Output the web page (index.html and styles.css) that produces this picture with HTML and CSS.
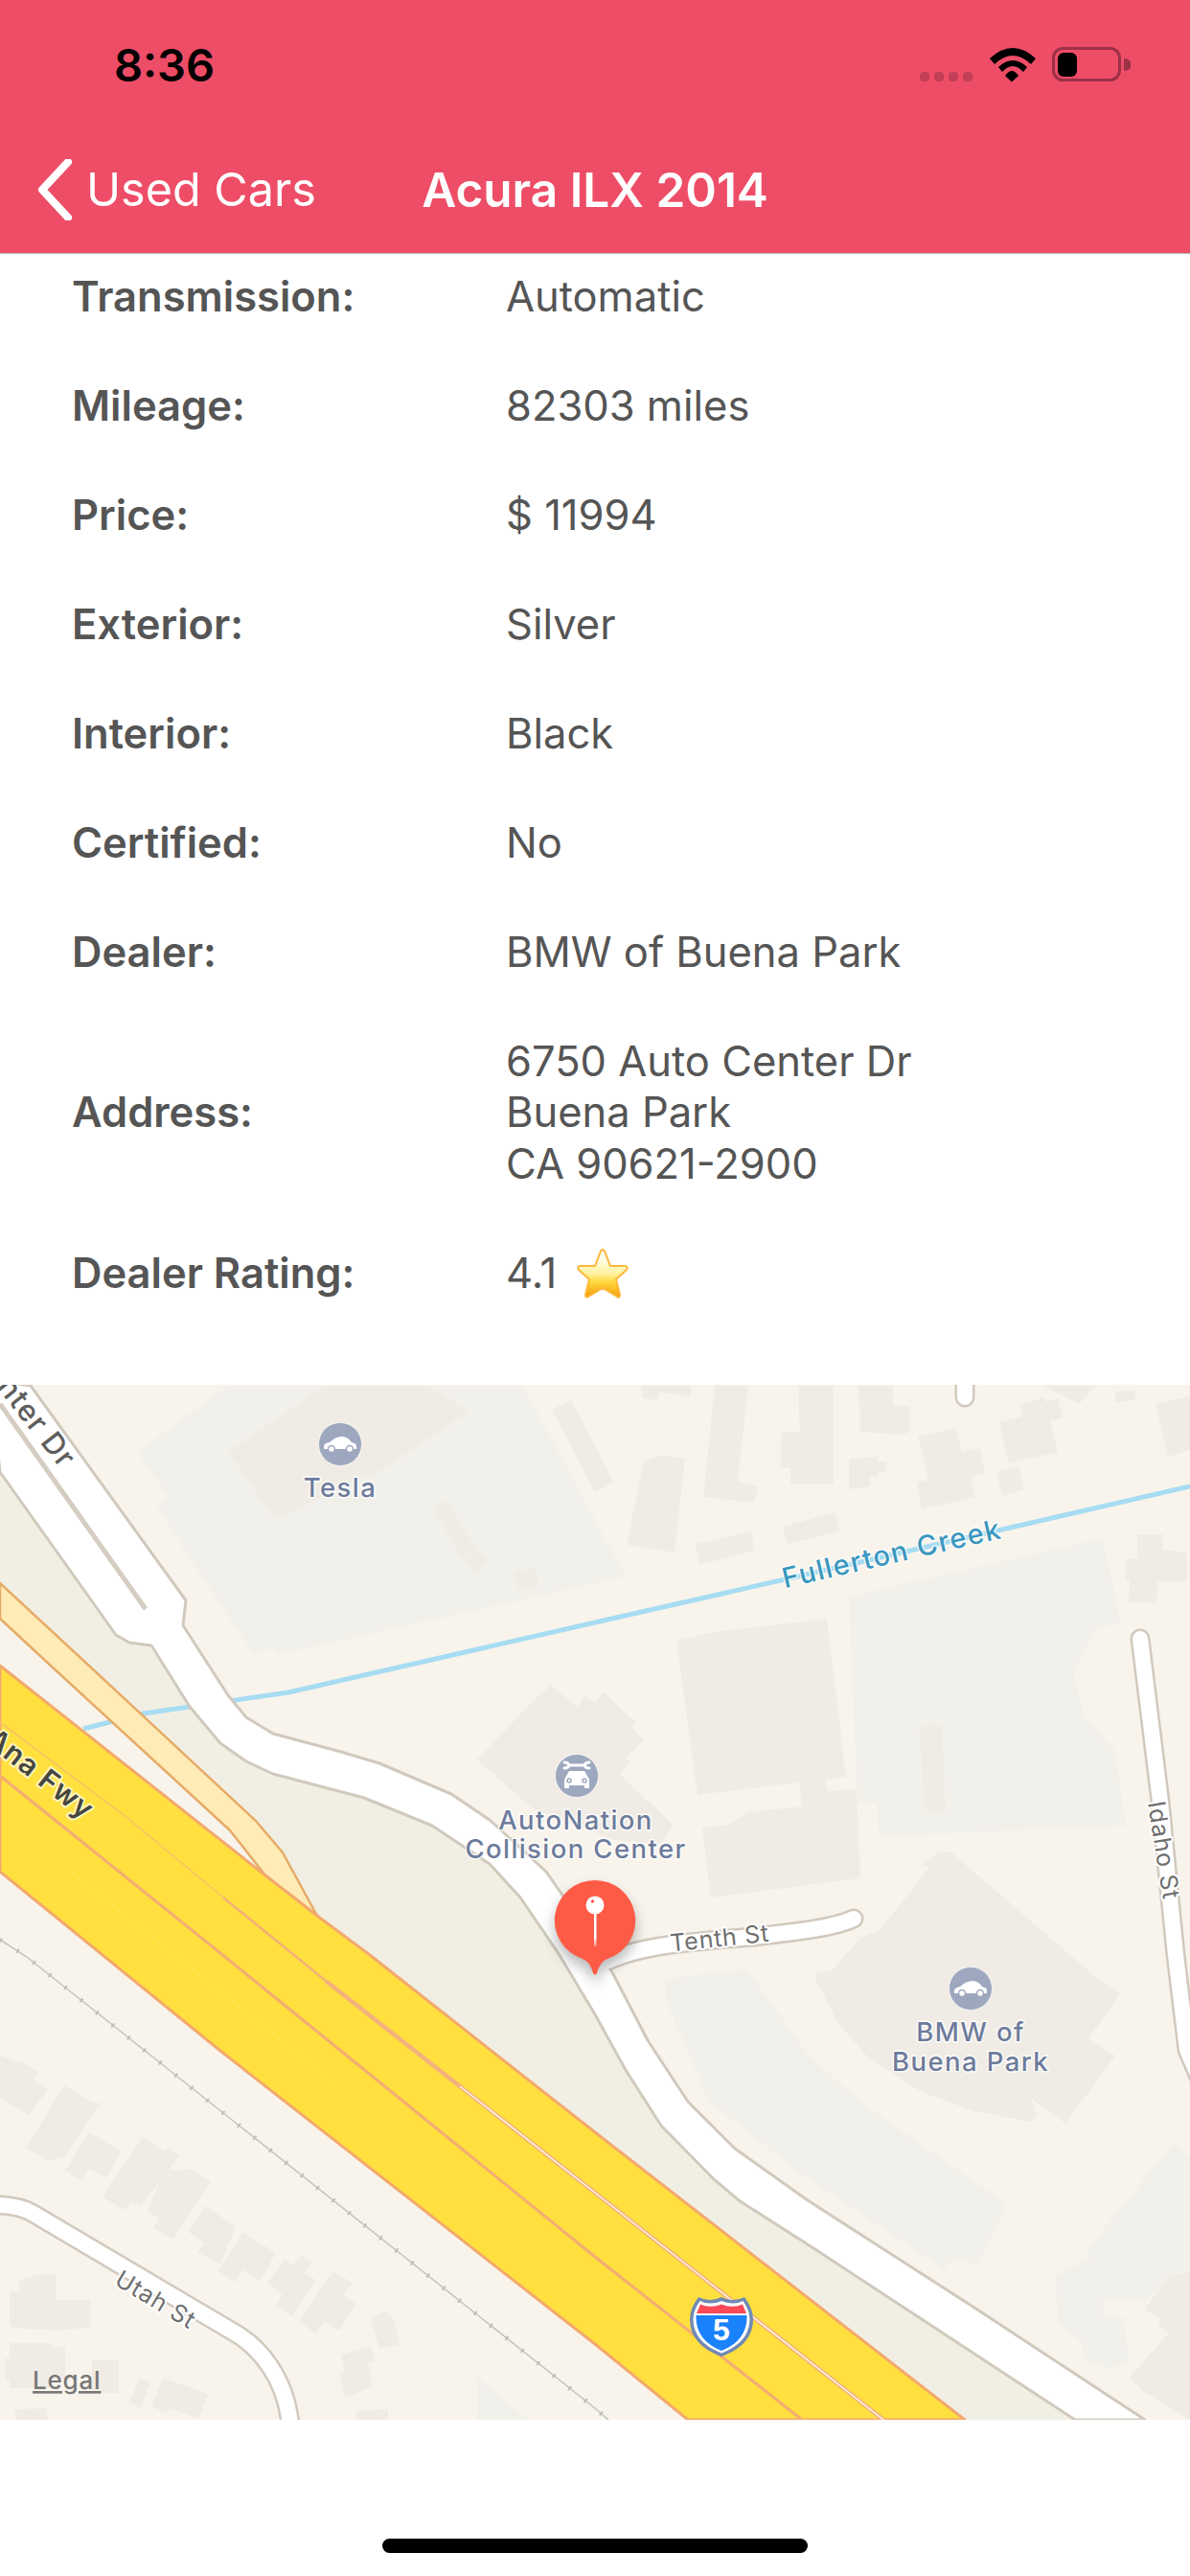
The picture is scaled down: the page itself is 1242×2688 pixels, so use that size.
FILE: index.html
```html
<!DOCTYPE html>
<html lang="en">
<head>
<meta charset="utf-8">
<title>Acura ILX 2014</title>
<link rel="stylesheet" href="styles.css">
</head>
<body>
<div class="page">
  <header class="header">
    <div class="status">
      <span class="time">8:36</span>
      <svg class="status-icons" viewBox="955 46 225 44" aria-hidden="true">
        <g class="sig"><rect x="960" y="75" width="10" height="10" rx="4"/><rect x="975" y="75" width="10" height="10" rx="4"/><rect x="990" y="75" width="10" height="10" rx="4"/><rect x="1005" y="75" width="10" height="10" rx="4"/></g>
        <path class="wifi" d="M1033 61Q1057 39 1081 61L1076 67Q1057 49 1038 67ZM1042 70Q1057 56 1072 70L1068 75Q1057 63 1046 75ZM1049 79Q1056 69 1063 79L1056 85.500Z"/>
        <rect class="batt" x="1099.500" y="50.500" width="69" height="33" rx="10"/>
        <path class="batt-nub" d="M1173 61a8 6.500 0 0 1 0 13z"/>
        <rect x="1104" y="55" width="20" height="25" rx="6"/>
      </svg>
    </div>
    <nav class="nav">
      <a class="back">
        <svg class="chevron" viewBox="0 0 36 64" aria-hidden="true"><path d="M32 3L5 32L32 61"/></svg>
        <span>Used Cars</span>
      </a>
      <h1 class="title">Acura ILX 2014</h1>
      <span></span>
    </nav>
  </header>

  <main>
    <section class="details">
      <div class="row"><div class="label">Transmission:</div><div class="value">Automatic</div></div>
      <div class="row"><div class="label">Mileage:</div><div class="value">82303 miles</div></div>
      <div class="row"><div class="label">Price:</div><div class="value">$ 11994</div></div>
      <div class="row"><div class="label">Exterior:</div><div class="value">Silver</div></div>
      <div class="row"><div class="label">Interior:</div><div class="value">Black</div></div>
      <div class="row"><div class="label">Certified:</div><div class="value">No</div></div>
      <div class="row"><div class="label">Dealer:</div><div class="value">BMW of Buena Park</div></div>
      <div class="row"><div class="label">Address:</div><div class="value">6750 Auto Center Dr<br>Buena Park<br>CA 90621-2900</div></div>
      <div class="row"><div class="label">Dealer Rating:</div><div class="value rating">4.1
        <svg class="star" viewBox="0 0 58 54" aria-hidden="true">
          <defs><linearGradient id="starFill" x1="0" y1="0" x2="0" y2="1"><stop offset="0.2" stop-color="#fffde8"/><stop offset="0.5" stop-color="#fff3a0"/><stop offset="0.68" stop-color="#ffd83c"/><stop offset="1" stop-color="#f39c0c"/></linearGradient></defs>
          <path class="star-shape" d="M29 2Q31 2 32 6L37 19L53 19Q56 20 54 23L43 33L47 49Q47 53 44 51L29 42L14 51Q11 53 11 49L15 33L4 23Q2 20 5 19L21 19L26 6Q27 2 29 2Z"/>
        </svg>
      </div></div>
    </section>

    <section class="map">
      <svg class="map-svg" viewBox="0 1445 1242 1080" aria-label="Map">
        <defs>
          <linearGradient id="stemFade" x1="0" y1="0" x2="0" y2="1"><stop offset="0.75" stop-color="#fff"/><stop offset="1" stop-color="#fff" stop-opacity="0.3"/></linearGradient>
        </defs>
        <rect class="m-bg" x="0" y="1445" width="1242" height="1080"/>

        <!-- lots -->
        <g class="m-lot">
          <polygon points="143,1515 238,1446 546,1446 653,1645 289,1727 285,1719 265,1727 164,1574 176,1562"/>
          <polygon points="886,1666 1151,1605 1170,1693 1144,1700 1121,1746 1132,1792 1164,1827 1175,1905 917,1916 915,1882 895,1882"/>
          <polygon points="694,2065 779,2054 843,2143 898,2193 1051,2300 1021,2364 995,2356 985,2368 839,2271 740,2193 694,2085"/>
          <polygon points="1225,2236 1242,2251 1242,2370 1219,2375 1195,2403 1187,2400 1152,2400 1152,2418 1173,2418 1179,2466 1155,2472 1132,2462 1128,2443 1104,2424 1102,2375 1136,2358 1134,2348"/>
          <polygon points="498,2480 552,2525 498,2525"/>
        </g>

        <!-- buildings -->
        <g class="m-bld">
          <polygon points="238,1515 340,1446 447,1446 489,1473 398,1534 287,1585"/>
          <polygon points="576,1471 596,1461 641,1547 621,1557"/>
          <polygon points="451,1572 465,1566 497,1616 481,1624"/>
          <polygon points="484,1626 497,1616 509,1631 495,1641"/>
          <polygon points="537,1641 558,1636 562,1654 541,1658"/>
          <polygon points="670,1446 722,1446 720,1457 688,1453 686,1461 670,1459"/>
          <polygon points="672,1524 692,1518 715,1522 704,1620 655,1612 661,1576"/>
          <polygon points="746,1446 781,1446 770,1545 791,1551 787,1568 734,1562"/>
          <polygon points="833,1446 870,1446 870,1549 825,1549 825,1532 815,1532 815,1495 835,1494"/>
          <polygon points="896,1446 932,1446 932,1467 950,1467 950,1494 942,1497 898,1494"/>
          <polygon points="886,1522 916,1520 916,1525 925,1525 925,1536 916,1536 916,1541 908,1541 908,1551 886,1554"/>
          <polygon points="958,1499 998,1490 1004,1515 1023,1511 1028,1538 1013,1540 1018,1562 962,1575 957,1547 969,1544"/>
          <polygon points="1043,1484 1067,1478 1065,1465 1090,1458 1092,1463 1104,1459 1109,1480 1096,1482 1104,1515 1053,1527"/>
          <polygon points="1040,1536 1063,1530 1069,1554 1046,1561"/>
          <polygon points="1088,1446 1144,1446 1126,1465"/>
          <polygon points="1164,1452 1185,1451 1185,1461 1164,1463"/>
          <polygon points="1206,1465 1242,1457 1242,1513 1219,1520"/>
          <polygon points="726,1611 785,1598 787,1618 730,1633"/>
          <polygon points="817,1593 871,1578 876,1598 822,1611"/>
          <polygon points="1187,1601 1214,1601 1213,1617 1239,1620 1239,1650 1208,1651 1207,1673 1178,1672 1179,1650 1175,1649 1175,1627 1187,1626"/>
          <polygon points="706,1712 744,1703 863,1689 883,1854 862,1857 863,1869 894,1867 898,1960 742,1980 733,1907 758,1905 781,1891 837,1885 834,1860 728,1873"/>
          <polygon points="960,1802 983,1800 987,1889 965,1890"/>
          <polygon points="498,1836 554,1777 575,1758 602,1781 610,1770 621,1777 630,1765 664,1798 659,1802 672,1815 653,1834 657,1838 647,1851 703,1905 690,1924 640,1920 554,1886"/>
          <polygon points="851,2065 874,2110 906,2147 962,2183 1017,2203 1076,2214 1082,2207 1076,2189 1112,2216 1164,2145 1136,2127 1162,2092 1169,2079 1146,2065 993,1933 981,1932 962,1945 970,1949 918,2014 898,2022 894,2027 882,2040 868,2057 853,2057"/>
          <polygon points="1219,2375 1242,2371 1242,2525 1193,2495 1179,2480 1220,2435 1209,2427 1211,2420 1195,2410"/>
          <polygon points="0,2145 24,2152 40,2162 35,2170 50,2180 30,2207 0,2189"/>
          <polygon points="67,2176 95,2193 106,2195 97,2205 67,2251 50,2255 27,2241"/>
          <polygon points="93,2225 127,2245 111,2273 93,2263 85,2275 68,2265"/>
          <polygon points="149,2230 172,2245 174,2241 187,2249 180,2259 147,2302 137,2298 129,2306 107,2292"/>
          <polygon points="172,2263 186,2265 198,2263 220,2276 180,2337 160,2325 166,2315 154,2307"/>
          <polygon points="214,2302 246,2323 230,2363 206,2350 214,2341 197,2329"/>
          <polygon points="253,2329 288,2351 271,2380 253,2368 246,2382 228,2370"/>
          <polygon points="315,2353 326,2360 317,2371 329,2379 305,2417 288,2406 295,2395 279,2382 297,2358 305,2364"/>
          <polygon points="349,2371 368,2382 358,2395 372,2404 354,2432 339,2422 329,2435 313,2422 337,2383"/>
          <polygon points="387,2419 402,2411 412,2422 417,2447 396,2451"/>
          <polygon points="356,2457 388,2448 391,2464 384,2466 389,2490 360,2502 354,2476 360,2474"/>
          <polygon points="20,2379 42,2373 59,2374 59,2400 94,2400 95,2428 63,2432 28,2430 10,2428 10,2391 20,2391"/>
          <polygon points="10,2445 53,2445 53,2449 68,2449 68,2482 53,2483 53,2492 10,2492 10,2484 5,2484 5,2461 10,2461"/>
          <polygon points="96,2462 124,2462 124,2497 96,2497"/>
          <polygon points="146,2481 157,2486 147,2513 135,2507"/>
          <polygon points="170,2481 217,2498 208,2523 176,2513 174,2518 158,2511"/>
          <polygon points="16,2514 49,2513 50,2525 16,2525"/>
          <polygon points="372,2516 405,2514 405,2525 372,2525"/>
        </g>

        <!-- green verge -->
        <polygon class="m-green" points="0,1536 121,1706 135,1714 158,1717 198,1781 230,1819 257,1838 285,1851 380,1876 451,1905 511,1945 543,1980 582,2037 621,2102 653,2160 690,2218 744,2273 771,2296 843,2342 1122,2525 1007,2525 621,2226 386,2040 331,1999 293,1930 265,1895 0,1650"/>

        <!-- creek -->
        <polyline class="m-creek" points="87,1804 150,1788 301,1766 621,1693 815,1649 1242,1551"/>

        <!-- railway -->
        <polyline class="m-rail" points="0,2024 28,2042 621,2513 635,2525"/>
        <polyline class="m-rail-ticks" points="0,2024 28,2042 621,2513 635,2525"/>

        <!-- ramp and freeway -->
        <polygon class="m-ramp" points="0,1652 95,1740 267,1900 295,1933 331,1999 277,1957 240,1910 55,1740 0,1689"/>
        <polygon class="m-fwy" points="0,1738 277,1957 331,1999 386,2040 621,2225 1007,2525 718,2525 621,2446 230,2140 0,1953"/>
        <polyline class="m-lane" points="0,1853 67,1907 230,2038 621,2355 837,2525"/>
        <polyline class="m-lane-thin" points="0,1797 133,1897 233,1980"/>
        <polyline class="m-lane-faint" points="73,1953 307,2140 348,2176"/>
        <polyline class="m-lane-med" points="233,1980 340,2067"/>
        <polyline class="m-lane-mid" points="340,2067 621,2288 922,2525"/>
        <polyline class="m-lane-core" points="480,2177 621,2288 922,2525"/>

        <!-- streets -->
        <polyline class="m-st-out" points="1007,1440 1007,1458"/>
        <polyline class="m-st-in" points="1007,1440 1007,1458"/>
        <polyline class="m-st-out" points="1190,1710 1211,1880 1227,2040 1239,2139 1255,2176"/>
        <polyline class="m-st-in" points="1190,1710 1211,1880 1227,2040 1239,2139 1255,2176"/>
        <path class="m-st-out" d="M-5 2301C10 2301 25 2304 35 2310L248 2436C270 2450 298 2480 303 2530"/>
        <path class="m-st-in" d="M-5 2301C10 2301 25 2304 35 2310L248 2436C270 2450 298 2480 303 2530"/>
        <path class="m-st-out" d="M630 2048C660 2034 690 2028 787 2021C830 2016 870 2012 891 2002"/>

        <!-- main road -->
        <polygon class="m-road" points="32,1446 194,1670 191,1696 238,1769 257,1792 285,1809 356,1828 396,1840 471,1872 511,1899 570,1953 586,1976 639,2058 676,2129 718,2193 767,2242 843,2296 1017,2408 1195,2525 1122,2525 843,2342 771,2296 744,2273 690,2218 653,2160 621,2102 582,2037 543,1980 511,1945 451,1905 380,1876 285,1851 257,1838 230,1819 198,1781 158,1717 135,1714 121,1706 0,1536 -10,1440"/>
        <path class="m-st-in" d="M630 2048C660 2034 690 2028 787 2021C830 2016 870 2012 891 2002"/>
        <polyline class="m-median" points="0,1465 152,1679"/>

        <!-- labels -->
        <text class="t-road t-dark" text-anchor="end" transform="translate(64 1534) rotate(52)">nter Dr</text>
        <text class="t-fwy" text-anchor="end" transform="translate(88 1900) rotate(38)">Ana Fwy</text>
        <text class="t-creek" text-anchor="middle" transform="translate(933 1631) rotate(-13)">Fullerton Creek</text>
        <text class="t-road t-small" text-anchor="middle" transform="translate(752 2031) rotate(-6)">Tenth St</text>
        <text class="t-road t-small" text-anchor="middle" transform="translate(1206 1932) rotate(81)">Idaho St</text>
        <text class="t-road t-small" text-anchor="middle" transform="translate(158 2407) rotate(31)">Utah St</text>
        <text class="t-poi" text-anchor="middle" x="355" y="1562">Tesla</text>
        <text class="t-poi" text-anchor="middle" x="601" y="1909">AutoNation</text>
        <text class="t-poi" text-anchor="middle" x="601" y="1939">Collision Center</text>
        <text class="t-poi" text-anchor="middle" x="1013" y="2130">BMW of</text>
        <text class="t-poi" text-anchor="middle" x="1013" y="2161">Buena Park</text>
        <text class="t-legal" x="34" y="2493">Legal</text>

        <!-- poi icons -->
        <g transform="translate(355 1507)">
          <circle class="poi-disc" r="22.500"/>
          <path class="poi-ico" d="M-17 4Q-18 -1 -11 -2Q-5 -8 2 -8Q8 -8 12 -2Q17 -1 17 2L17 5L-17 5Z"/>
          <circle class="poi-wheel" cx="-9" cy="5" r="3.500"/><circle class="poi-wheel" cx="10" cy="5" r="3.500"/>
        </g>
        <g transform="translate(1013 2075)">
          <circle class="poi-disc" r="22.500"/>
          <path class="poi-ico" d="M-17 4Q-18 -1 -11 -2Q-5 -8 2 -8Q8 -8 12 -2Q17 -1 17 2L17 5L-17 5Z"/>
          <circle class="poi-wheel" cx="-9" cy="5" r="3.500"/><circle class="poi-wheel" cx="10" cy="5" r="3.500"/>
        </g>
        <g transform="translate(602 1853)">
          <circle class="poi-disc" r="22.500"/>
          <path class="poi-wrench" d="M-8 -11H8M-13 -14Q-9 -14 -8 -11Q-9 -8 -13 -8M13 -14Q9 -14 8 -11Q9 -8 13 -8"/>
          <path class="poi-ico" d="M-12 2L-8 -5H8L12 2Q13 3 13 5V13H8V10H-8V13H-13V5Q-13 3 -12 2Z"/>
          <circle class="poi-wheel" cx="-8" cy="5" r="2"/><circle class="poi-wheel" cx="8" cy="5" r="2"/>
        </g>

        <!-- interstate shield -->
        <g transform="translate(720 2395)">
          <path class="sh-border" d="M9 2Q21 8 33 2Q45 8 57 2Q66 14 66 25Q66 52 33 64Q0 52 0 25Q0 14 9 2Z"/>
          <path class="sh-white" d="M10.500 6Q21 11 33 6Q45 11 55.500 6Q62.500 16 62.500 25Q62.500 49 33 60.500Q3.500 49 3.500 25Q3.500 16 10.500 6Z"/>
          <path class="sh-blue" d="M6.500 21H59.500Q60.500 47 33 58Q5.500 47 6.500 21Z"/>
          <path class="sh-red" d="M11 9.500Q21 14 33 9.500Q45 14 55 9.500L59 19H7Z"/>
          <text class="sh-num" x="33" y="47" text-anchor="middle">5</text>
        </g>

        <!-- pin -->
        <g class="pin">
          <path class="pin-body" d="M621 1962A42 42 0 0 1 634 2044Q626 2047 623 2059Q621 2062 619 2059Q616 2047 608 2044A42 42 0 0 1 621 1962Z"/>
          <rect class="pin-stem" x="620" y="1996" width="2.500" height="35"/>
          <circle class="pin-head" cx="621" cy="1988" r="9.500"/>
          <circle class="pin-glint" cx="618.500" cy="1984" r="1.700"/>
        </g>
      </svg>
    </section>
  </main>
  <div class="home-indicator"></div>
</div>
</body>
</html>
```
FILE: styles.css
```css
* { box-sizing: border-box; }
html, body { margin: 0; padding: 0; background: #fff; }
body { font-family: Inter, "Liberation Sans", sans-serif; overflow: hidden; }
.page { width: 1242px; height: 2688px; overflow: hidden; display: flex; flex-direction: column; }

.header { position: relative; z-index: 2; height: 265px; background: #ee4d67; border-bottom: 1px solid #b9b9b9; flex: none; }
.status { height: 132px; padding: 40px 62px 0 119px; display: flex; justify-content: space-between; align-items: flex-start; }
.time { font-size: 47px; line-height: 56px; font-weight: 600; color: #000; }
.status-icons { width: 225px; height: 44px; margin-top: 6px; }
.sig rect { fill: #c13f57; }
.wifi { fill: #000; }
.batt { fill: none; stroke: #9c3047; stroke-width: 3; }
.batt-nub { fill: #9c3047; }

.nav { height: 132px; display: grid; grid-template-columns: 1fr auto 1fr; align-items: center; color: #fff; }
.back { display: flex; align-items: center; padding-left: 39px; font-size: 48.500px; gap: 15px; line-height: 64px; }
.chevron { width: 36px; height: 64px; flex: none; }
.chevron path { fill: none; stroke: #fff; stroke-width: 8; stroke-linecap: round; stroke-linejoin: round; }
.title { margin: 0; font-size: 49.500px; line-height: 64px; font-weight: 600; }

.details { margin-top: -12.500px; padding: 0 0 59px 75px; color: #555; font-size: 43.500px; line-height: 53.500px; }
.row { display: grid; grid-template-columns: 453px 1fr; align-items: center; padding: 30.250px 0; }
.label { font-weight: 600; }
.rating { display: flex; align-items: center; gap: 19px; }
.star { width: 58px; height: 54px; flex: none; }
.star-shape { fill: url(#starFill); stroke: #fdb73c; stroke-width: 2; stroke-linejoin: round; }

.map { height: 1080px; flex: none; }
.map-svg { display: block; width: 1242px; height: 1080px; font-family: Inter, "Liberation Sans", sans-serif; }
.m-bg { fill: #f8f4ec; }
.m-lot { fill: #f2f0ea; }
.m-bld { fill: #f0ece5; }
.m-green { fill: #f1efe3; }
.m-creek { fill: none; stroke: #a7dcf2; stroke-width: 5; }
.m-rail { fill: none; stroke: #c2c2c0; stroke-width: 1.500; }
.m-rail-ticks { fill: none; stroke: #bdbdbb; stroke-width: 5; stroke-dasharray: 2 19; }
.m-ramp { fill: #feebb5; stroke: #e6ab68; stroke-width: 2.500; stroke-linejoin: round; }
.m-fwy { fill: #ffe03f; stroke: #f3a96d; stroke-width: 3; stroke-linejoin: round; }
.m-lane { fill: none; stroke: #f3ad72; stroke-width: 3; }
.m-lane-thin { fill: none; stroke: #f6c068; stroke-width: 1.500; }
.m-lane-faint { fill: none; stroke: #ffe75f; stroke-width: 1; }
.m-lane-med { fill: none; stroke: #f3b077; stroke-width: 2.500; }
.m-lane-mid { fill: none; stroke: #f4b27c; stroke-width: 4.500; }
.m-lane-core { fill: none; stroke: #fff6e4; stroke-width: 1.500; }
.m-st-out { fill: none; stroke: #d1c9bd; stroke-width: 21; stroke-linecap: round; stroke-linejoin: round; }
.m-st-in { fill: none; stroke: #fff; stroke-width: 16; stroke-linecap: round; stroke-linejoin: round; }
.m-road { fill: #fff; stroke: #d1c9bd; stroke-width: 3; stroke-linejoin: round; }
.m-median { fill: none; stroke: #d5cdc1; stroke-width: 5; }

.t-road { paint-order: stroke; stroke: #fff; stroke-width: 4; stroke-linejoin: round; }
.t-dark { font-size: 31px; font-weight: 500; fill: #5e5e5e; letter-spacing: 1.200px; }
.t-small { font-size: 25px; fill: #6f6f6f; letter-spacing: 0.800px; }
.t-fwy { font-size: 30px; font-weight: 600; fill: #46463f; letter-spacing: 1px; paint-order: stroke; stroke: #fff6c0; stroke-width: 4; stroke-linejoin: round; }
.t-creek { font-size: 29px; font-weight: 500; fill: #3b97be; letter-spacing: 1.500px; paint-order: stroke; stroke: rgba(255, 255, 255, 0.75); stroke-width: 3; stroke-linejoin: round; }
.t-poi { font-size: 27.500px; font-weight: 500; fill: #6d7b9b; letter-spacing: 1.400px; paint-order: stroke; stroke: rgba(255, 255, 255, 0.85); stroke-width: 3; stroke-linejoin: round; }
.t-legal { font-size: 26px; font-weight: 500; fill: #777; text-decoration: underline; letter-spacing: 0.800px; }

.poi-disc { fill: #9da8bf; stroke: #fff; stroke-opacity: 0.7; stroke-width: 1; }
.poi-ico { fill: #fff; }
.poi-wheel { fill: #fff; stroke: #9da8bf; stroke-width: 1.500; }
.poi-wrench { fill: none; stroke: #fff; stroke-width: 3; stroke-linecap: round; }

.sh-border { fill: #7089b5; }
.sh-white { fill: #fff; }
.sh-blue { fill: #1a82fb; }
.sh-red { fill: #fb4958; }
.sh-num { font-family: "Liberation Sans", sans-serif; font-size: 32px; font-weight: 700; fill: #fff; }

.pin { filter: drop-shadow(0 8px 7px rgba(0, 0, 0, 0.28)); }
.pin-body { fill: #fe5b47; }
.pin-stem { fill: url(#stemFade); }
.pin-head { fill: #fff; }
.pin-glint { fill: #fe5b47; }

.home-indicator { width: 444px; height: 15px; border-radius: 8px; background: #000; margin: 124px auto 0; flex: none; }
```
